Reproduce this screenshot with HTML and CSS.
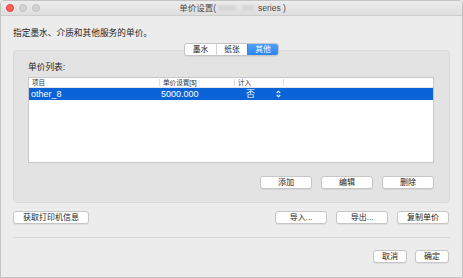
FILE: index.html
```html
<!DOCTYPE html>
<html lang="zh">

<head>
    <meta charset="UTF-8">
    <title>单价设置</title>
    <link rel="stylesheet" href="styles.css">
</head>

<body>
    <div class="window">
        <!-- Title bar -->
        <header class="titlebar">
            <div class="lights">
                <span class="light close"></span>
                <span class="light off"></span>
                <span class="light off"></span>
            </div>
            <div class="title">
                单价设置(<span class="blur"><i class="w1"></i><i class="w2"></i></span>series )
            </div>
        </header>

        <main class="content">
            <p class="intro">指定墨水、介质和其他服务的单价。</p>

            <div class="tabs">
                <span class="tab">墨水</span>
                <span class="tab">纸张</span>
                <span class="tab active">其他</span>
            </div>

            <section class="group">
                <p class="group-label">单价列表:</p>

                <div class="table">
                    <div class="row head">
                        <span class="cell">项目</span>
                        <span class="cell sep">单价设置[$]</span>
                        <span class="cell sep">计入</span>
                        <span class="cell sep"></span>
                    </div>
                    <div class="row selected">
                        <span class="cell">other_8</span>
                        <span class="cell">5000.000</span>
                        <span class="cell popup">否
                            <svg class="arrows" width="5" height="8" viewBox="0 0 5 8">
                                <path d="M0.8 3 L2.5 1.2 L4.2 3 M0.8 5 L2.5 6.8 L4.2 5" fill="none" stroke="#fff" stroke-width="1.1"/>
                            </svg>
                        </span>
                        <span class="cell"></span>
                    </div>
                </div>

                <div class="button-row">
                    <button class="btn">添加</button>
                    <button class="btn">编辑</button>
                    <button class="btn">删除</button>
                </div>
            </section>

            <div class="action-row">
                <button class="btn wide">获取打印机信息</button>
                <div class="spacer"></div>
                <button class="btn">导入...</button>
                <button class="btn">导出...</button>
                <button class="btn">复制单价</button>
            </div>

            <hr class="divider">

            <div class="dialog-row">
                <button class="btn small">取消</button>
                <button class="btn small">确定</button>
            </div>
        </main>
    </div>
</body>

</html>
```

FILE: styles.css
```css
/* Reset */

* {
    margin: 0;
    padding: 0;
    box-sizing: border-box;
}

body {
    font-family: "Liberation Sans", "Noto Sans CJK SC", sans-serif;
    background-color: #ececec;
    color: #222;
}

/* Window frame */

.window {
    width: 463px;
    height: 278px;
    background-color: #ececec;
    border: 1px solid #c4c4c4;
    border-radius: 4px 4px 0 0;
    display: flex;
    flex-direction: column;
    overflow: hidden;
}

/* Title bar */

.titlebar {
    height: 15px;
    flex-shrink: 0;
    background: linear-gradient(#ececec, #dedede);
    border-bottom: 1px solid #cdcdcd;
    display: flex;
    align-items: center;
    position: relative;
}

.lights {
    display: flex;
    gap: 5px;
    padding-left: 5px;
}

.light {
    width: 8px;
    height: 8px;
    border-radius: 50%;
    background-color: #d2d2d2;
    border: 1px solid #c2c2c2;
}

.light.close {
    background-color: #fc5f57;
    border-color: #e0443e;
}

.title {
    position: absolute;
    left: 0;
    right: 0;
    text-align: center;
    font-size: 8.5px;
    line-height: 15px;
    color: #4a4a4a;
    padding-left: 2px;
}

.blur {
    display: inline-flex;
    gap: 6px;
    width: 42px;
    padding: 0 2px;
    vertical-align: middle;
}

.blur i {
    display: block;
    height: 6px;
    background-color: #d6d6d6;
    filter: blur(1px);
}

.blur .w1 {
    width: 18px;
}

.blur .w2 {
    width: 12px;
}

/* Content */

.content {
    flex: 1;
    padding: 11px 12px 0 12px;
    display: flex;
    flex-direction: column;
}

.intro {
    font-size: 8.7px;
    line-height: 12px;
    color: #1e1e1e;
}

/* Segmented control */

.tabs {
    align-self: center;
    display: flex;
    margin-top: 4px;
    margin-bottom: -6px;
    height: 13px;
    background-color: #fff;
    border: 1px solid #c6c6c6;
    border-radius: 3px;
    box-shadow: 0 1px 0 rgba(0, 0, 0, 0.05);
    position: relative;
    z-index: 1;
    overflow: hidden;
}

.tab {
    width: 31px;
    font-size: 7.8px;
    line-height: 11px;
    text-align: center;
    color: #222;
    border-left: 1px solid #d4d4d4;
}

.tab:first-child {
    border-left: none;
}

.tab.active {
    background: linear-gradient(#4fa0fb, #2b84f6);
    color: #fff;
    border-left-color: #2b84f6;
}

/* Group box */

.group {
    background-color: #e3e3e3;
    border: 1px solid #d9d9d9;
    border-radius: 4px;
    padding: 10px 15px 13px 14px;
    display: flex;
    flex-direction: column;
}

.group-label {
    font-size: 8.7px;
    line-height: 12px;
    color: #222;
}

/* Table */

.table {
    margin-top: 4px;
    height: 86px;
    background-color: #fff;
    border: 1px solid #c8c8c8;
}

.row {
    display: grid;
    grid-template-columns: 130px 75px 49px 1fr;
    align-items: center;
}

.row.head {
    height: 10px;
    border-bottom: 1px solid #e4e4e4;
}

.row.head .cell {
    font-size: 6.6px;
    line-height: 9px;
    color: #333;
    padding-left: 3px;
}

.row.head .sep {
    border-left: 1px solid #dcdcdc;
    height: 7px;
    line-height: 7px;
}

.row.selected {
    height: 12px;
    background-color: #0b63d8;
}

.row.selected .cell {
    font-size: 9px;
    line-height: 12px;
    color: #fff;
    padding-left: 2px;
}

.row.selected .popup {
    padding-left: 12px;
    display: flex;
    align-items: center;
    justify-content: space-between;
    padding-right: 2px;
}

.arrows {
    display: block;
}

/* Buttons */

.btn {
    font-family: "Liberation Sans", "Noto Sans CJK SC", sans-serif;
    font-size: 8px;
    line-height: 11px;
    height: 13px;
    width: 52px;
    color: #222;
    background-color: #fff;
    border: 1px solid #c6c6c6;
    border-radius: 3px;
    box-shadow: 0 1px 0 rgba(0, 0, 0, 0.06);
    cursor: pointer;
}

.btn.wide {
    width: 76px;
}

.btn.small {
    width: 34px;
}

.button-row {
    margin-top: 13px;
    display: flex;
    justify-content: flex-end;
    gap: 9px;
}

.action-row {
    margin-top: 8px;
    display: flex;
    gap: 9px;
    padding-right: 1px;
}

.spacer {
    flex: 1;
}

.divider {
    margin-top: 13px;
    border: none;
    border-top: 1px solid #d8d8d8;
}

.dialog-row {
    margin-top: 12px;
    display: flex;
    justify-content: flex-end;
    gap: 8px;
    padding-right: 1px;
}
```
